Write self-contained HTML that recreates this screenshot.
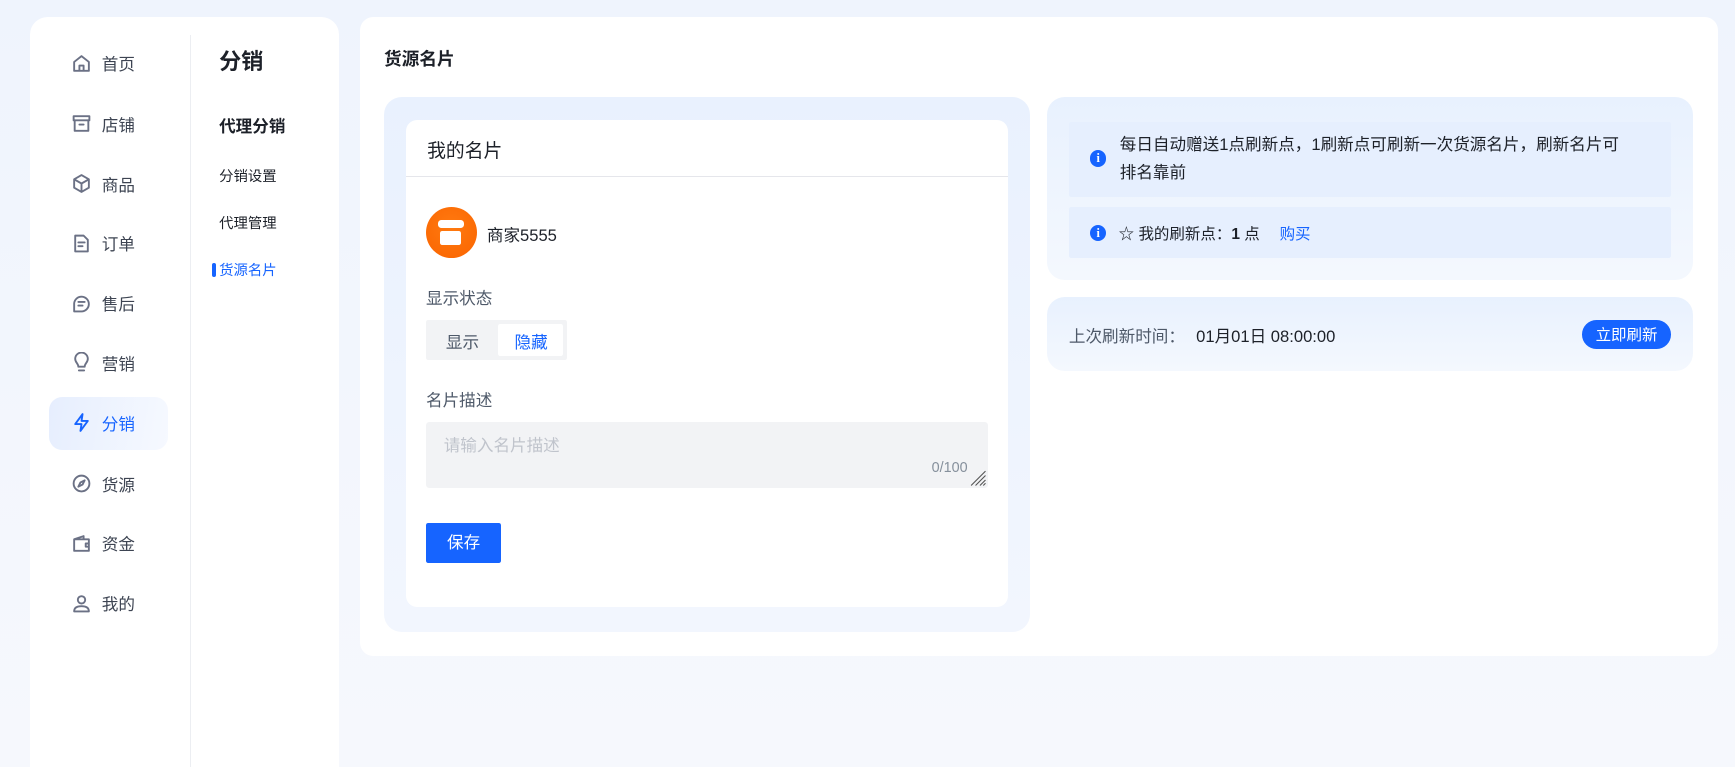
<!DOCTYPE html>
<html><head><meta charset="utf-8"><style>
*{margin:0;padding:0;box-sizing:border-box}
html,body{width:1735px;height:767px;overflow:hidden;background:#f4f7fd}
body{font-family:"Liberation Sans","Noto Sans CJK SC",sans-serif;color:#1d2129}
#w{zoom:1.1065;width:1568px;height:693px;position:relative;background:linear-gradient(180deg,#eff4fd 0,#f6f8fd 100%)}
.a{position:absolute}
.side{left:27px;top:15px;width:279px;height:700px;background:#fff;border-radius:16px}
.nav{left:64px;height:24px;display:flex;align-items:center;font-size:15px;color:#3d4452}
.nav svg{width:19px;height:19px;margin-right:9px;fill:none;stroke:#6b7185;stroke-width:1.8;stroke-linecap:round;stroke-linejoin:round}
.act{left:44px;top:359px;width:108px;height:48px;border-radius:12px;background:linear-gradient(100deg,#e6eefe,#f6f9ff)}
.sub{left:198px;font-size:13px;color:#1d2129}
.main{left:325px;top:15px;width:1228px;height:578px;background:#fff;border-radius:12px}
.lp{left:347px;top:88px;width:584px;height:483px;background:linear-gradient(180deg,#e9f1fe,#f2f6fe);border-radius:16px}
.card{left:367px;top:108px;width:544px;height:441px;background:#fff;border-radius:10px}
.rp{left:946px;width:584px;border-radius:16px;background:linear-gradient(180deg,#e8f1fe,#f4f8fe)}
.tip{left:966px;width:544px;background:#e6effe;border-radius:2px;font-size:14px;color:#1d2129}
.ic{width:15px;height:15px;border-radius:50%;background:#1664ff;color:#fff;font-size:11px;font-weight:bold;text-align:center;line-height:15px;font-family:"Liberation Serif",serif}
</style></head><body><div id="w">
<div class="a side"></div>
<div class="a" style="left:172px;top:32px;width:1px;height:661px;background:#eceef2"></div>
<div class="a act"></div>

<div class="a nav" style="top:45px"><svg viewBox="0 0 20 20"><path d="M3 8.5L10 3l7 5.5V17H3z M8 17v-5h4v5"/></svg>首页</div>
<div class="a nav" style="top:100px"><svg viewBox="0 0 20 20"><rect x="2.5" y="3" width="15" height="4"/><path d="M3.5 7v10h13V7 M8 11h4"/></svg>店铺</div>
<div class="a nav" style="top:154px"><svg viewBox="0 0 20 20"><path d="M10 2l7 4v8l-7 4-7-4V6z M3 6l7 4 7-4 M10 10v8"/></svg>商品</div>
<div class="a nav" style="top:208px"><svg viewBox="0 0 20 20"><path d="M4 2.5h8l4 4V17.5H4z M7 9h6 M7 12.5h4"/></svg>订单</div>
<div class="a nav" style="top:262px"><svg viewBox="0 0 20 20"><path d="M3 17.5V10a7 7 0 1 1 7 7.5z M7 8.5h6 M7 12h4"/></svg>售后</div>
<div class="a nav" style="top:316px"><svg viewBox="0 0 20 20"><path d="M7 14c0-3-3-4-3-7.5a6 6 0 0 1 12 0C16 10 13 11 13 14z M7.5 17.5h5"/></svg>营销</div>
<div class="a nav" style="top:370px;color:#1664ff"><svg viewBox="0 0 20 20" style="stroke:#1664ff"><path d="M11 2L4 11.5h6L9 18l7-9.5h-6z"/></svg>分销</div>
<div class="a nav" style="top:425px"><svg viewBox="0 0 20 20"><circle cx="10" cy="10" r="7.5"/><path d="M13 7l-2 4-4 2 2-4z"/></svg>货源</div>
<div class="a nav" style="top:479px"><svg viewBox="0 0 20 20"><path d="M3 6h14v11H3z M3 6l9-3v3 M17 10h-3v3h3"/></svg>资金</div>
<div class="a nav" style="top:533px"><svg viewBox="0 0 20 20"><circle cx="10" cy="6.5" r="3.5"/><path d="M3 17.5c0-4 3-5 7-5s7 1 7 5z"/></svg>我的</div>

<div class="a" style="left:198px;top:40px;font-size:20px;font-weight:bold">分销</div>
<div class="a" style="left:198px;top:102px;font-size:15px;font-weight:bold">代理分销</div>
<div class="a sub" style="top:149px">分销设置</div>
<div class="a sub" style="top:192px">代理管理</div>
<div class="a" style="left:192px;top:238px;width:3px;height:12px;background:#1664ff;border-radius:2px"></div>
<div class="a sub" style="top:234px;color:#1664ff">货源名片</div>

<div class="a main"></div>
<div class="a" style="left:347px;top:41px;font-size:16px;font-weight:bold">货源名片</div>
<div class="a lp"></div>
<div class="a card"></div>
<div class="a" style="left:386px;top:123px;font-size:17px">我的名片</div>
<div class="a" style="left:367px;top:159px;width:544px;height:1px;background:#e5e6eb"></div>
<div class="a" style="left:385px;top:187px;width:46px;height:46px;border-radius:50%;background:radial-gradient(circle at 50% 40%,#ff7a10,#fa6400)"></div>
<div class="a" style="left:396px;top:199px;width:23px;height:7px;border-radius:3px;background:#fff"></div>
<div class="a" style="left:398px;top:209px;width:19px;height:12px;border-radius:2px;background:#fff"></div>
<div class="a" style="left:440px;top:201px;font-size:15px">商家5555</div>
<div class="a" style="left:385px;top:258px;font-size:15px;color:#4e5969">显示状态</div>
<div class="a" style="left:385px;top:289px;width:127px;height:36px;background:#f2f3f5;border-radius:2px"></div>
<div class="a" style="left:450px;top:293px;width:59px;height:29px;background:#fff;border-radius:2px"></div>
<div class="a" style="left:403px;top:297px;font-size:15px;color:#4e5969">显示</div>
<div class="a" style="left:465px;top:297px;font-size:15px;color:#1664ff">隐藏</div>
<div class="a" style="left:385px;top:350px;font-size:15px;color:#4e5969">名片描述</div>
<div class="a" style="left:385px;top:381px;width:508px;height:60px;background:#f2f3f5;border-radius:3px"></div>
<div class="a" style="left:401px;top:390px;font-size:15px;color:#c0c4cc">请输入名片描述</div>
<div class="a" style="left:842px;top:416px;font-size:13px;color:#86909c">0/100</div>
<svg class="a" style="left:877px;top:425px" width="15" height="15" viewBox="0 0 15 15" stroke="#555" stroke-width="1"><path d="M1 14L14 1M5 14L14 5M9 14L14 9M12 14L14 12"/></svg>
<div class="a" style="left:385px;top:473px;width:68px;height:36px;background:#1664ff;border-radius:2px;color:#fff;font-size:15px;text-align:center;line-height:36px">保存</div>

<div class="a rp" style="top:88px;height:165px"></div>
<div class="a tip" style="top:110px;height:68px"></div>
<div class="a ic" style="left:985px;top:136px">i</div>
<div class="a" style="left:1012px;top:118px;font-size:15px;line-height:26px;width:466px">每日自动赠送1点刷新点，1刷新点可刷新一次货源名片，刷新名片可排名靠前</div>
<div class="a tip" style="top:187px;height:46px"></div>
<div class="a ic" style="left:985px;top:203px">i</div>
<div class="a" style="left:1011px;top:201px;font-size:14px">☆ 我的刷新点：<b>1</b> 点 <span style="color:#1664ff;font-size:14px;margin-left:14px">购买</span></div>

<div class="a rp" style="top:268px;height:67px"></div>
<div class="a" style="left:966px;top:292px;font-size:15px;color:#4e5969">上次刷新时间： <span style="color:#1d2129;margin-left:6px">01月01日 08:00:00</span></div>
<div class="a" style="left:1430px;top:289px;width:80px;height:26px;border-radius:13px;background:#1664ff;color:#fff;font-size:14px;display:flex;align-items:center;justify-content:center">立即刷新</div>
</div></body></html>
